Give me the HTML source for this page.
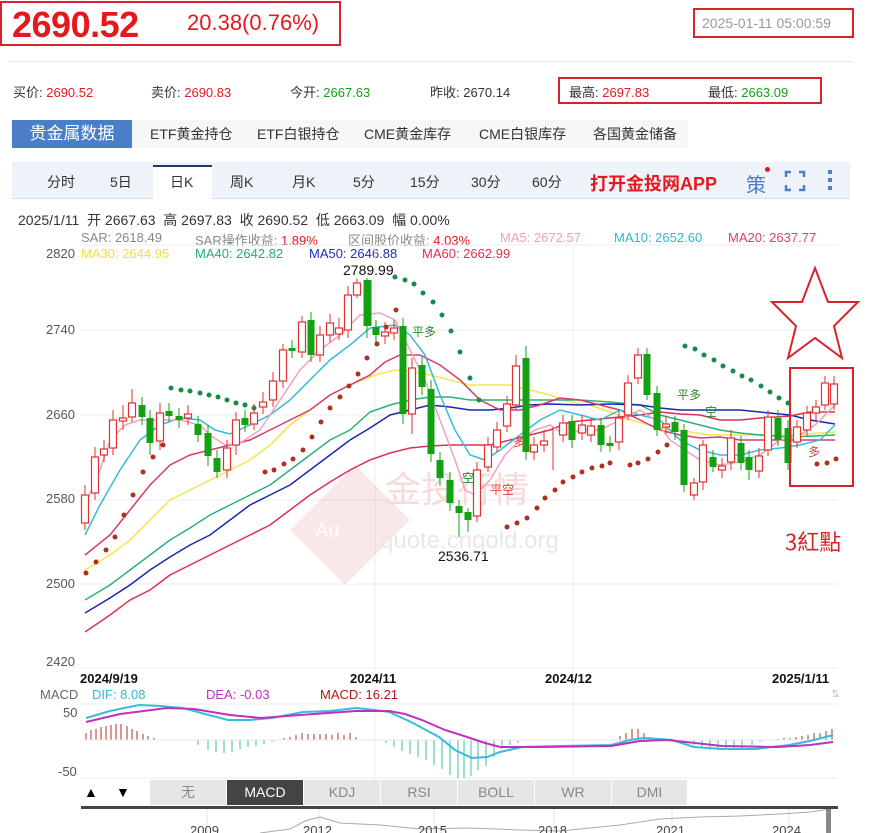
<!DOCTYPE html>
<html><head><meta charset="utf-8"><style>
*{margin:0;padding:0;box-sizing:border-box}
body{width:870px;height:833px;overflow:hidden;background:#fff;font-family:"Liberation Sans","Noto Sans CJK SC",sans-serif;position:relative;color:#333}
.a{position:absolute;white-space:nowrap}
.r{color:#e4181e}.g{color:#18a018}
.box{position:absolute;border:2px solid #d9232a}
.tab{position:absolute;top:120px;height:28px;line-height:28px;font-size:14px;color:#333}
.tb{position:absolute;top:172px;font-size:14px;color:#333}
.sub{position:absolute;top:780px;height:25px;line-height:25px;text-align:center;font-size:14px;color:#888;background:#e6e6e6;border-right:1px solid #fff}
</style></head><body>
<div class="box" style="left:0;top:1px;width:341px;height:45px"></div>
<div class="a r" style="left:12px;top:4px;font-size:36px;font-weight:bold;letter-spacing:-0.5px">2690.52</div>
<div class="a r" style="left:187px;top:10px;font-size:22px">20.38(0.76%)</div>
<div class="box" style="left:693px;top:8px;width:161px;height:30px"></div>
<div class="a" style="left:702px;top:15px;font-size:14px;color:#999">2025-01-11 05:00:59</div>
<div class="a" style="left:10px;top:61px;width:842px;height:1px;background:#e6e6e6"></div>
<div class="a" style="left:13px;top:82px;font-size:13px">买价: <span class="r">2690.52</span></div>
<div class="a" style="left:151px;top:82px;font-size:13px">卖价: <span class="r">2690.83</span></div>
<div class="a" style="left:290px;top:82px;font-size:13px">今开: <span class="g">2667.63</span></div>
<div class="a" style="left:430px;top:82px;font-size:13px">昨收: 2670.14</div>
<div class="box" style="left:558px;top:77px;width:264px;height:27px"></div>
<div class="a" style="left:569px;top:82px;font-size:13px">最高: <span class="r">2697.83</span></div>
<div class="a" style="left:708px;top:82px;font-size:13px">最低: <span class="g">2663.09</span></div>
<div class="a" style="left:132px;top:120px;width:556px;height:28px;background:#f7f7f7"></div>
<div class="tab" style="left:12px;width:120px;background:#4a7ec8;color:#fff;font-size:17px;text-align:center">贵金属数据</div>
<div class="tab" style="left:150px">ETF黄金持仓</div>
<div class="tab" style="left:257px">ETF白银持仓</div>
<div class="tab" style="left:364px">CME黄金库存</div>
<div class="tab" style="left:479px">CME白银库存</div>
<div class="tab" style="left:593px">各国黄金储备</div>
<div class="a" style="left:12px;top:162px;width:838px;height:37px;background:#eef3fa;border-bottom:1px solid #d8e0ea"></div>
<div class="a" style="left:153px;top:165px;width:59px;height:35px;background:#fff;border-top:2px solid #1f3a6a"></div>
<div class="tb" style="left:47px">分时</div><div class="tb" style="left:110px">5日</div><div class="tb" style="left:170px">日K</div><div class="tb" style="left:230px">周K</div><div class="tb" style="left:292px">月K</div><div class="tb" style="left:353px">5分</div><div class="tb" style="left:410px">15分</div><div class="tb" style="left:471px">30分</div><div class="tb" style="left:532px">60分</div>
<div class="a" style="left:590px;top:170px;font-size:18px;font-weight:bold;color:#e4181e">打开金投网APP</div>
<div class="a" style="left:746px;top:169px;font-size:20px;color:#4a7ec8">策</div>
<div class="a" style="left:765px;top:167px;width:5px;height:5px;border-radius:50%;background:#e4181e"></div>
<svg class="a" style="left:784px;top:170px" width="22" height="22"><path d="M2 7V2H7M15 2H20V7M20 15V20H15M7 20H2V15" stroke="#4a7ec8" stroke-width="2.5" fill="none"/></svg>
<div class="a" style="left:828px;top:170px;width:4px;height:4px;background:#4a7ec8;box-shadow:0 8px #4a7ec8,0 16px #4a7ec8"></div>
<div class="a" style="left:18px;top:210px;font-size:14px">2025/1/11 &nbsp;开 2667.63 &nbsp;高 2697.83 &nbsp;收 2690.52 &nbsp;低 2663.09 &nbsp;幅 0.00%</div>
<div class="a" style="left:81px;top:230px;font-size:13px;color:#888">SAR: 2618.49</div>
<div class="a" style="left:195px;top:230px;font-size:13px;color:#888">SAR操作收益: <span class="r">1.89%</span></div>
<div class="a" style="left:348px;top:230px;font-size:13px;color:#888">区间股价收益: <span class="r">4.03%</span></div>
<div class="a" style="left:500px;top:230px;font-size:13px;color:#f0a0b8">MA5: 2672.57</div>
<div class="a" style="left:614px;top:230px;font-size:13px;color:#30b8d0">MA10: 2652.60</div>
<div class="a" style="left:728px;top:230px;font-size:13px;color:#e04070">MA20: 2637.77</div>
<div class="a" style="left:46px;top:246px;font-size:13px;color:#555">2820</div>
<div class="a" style="left:81px;top:246px;font-size:13px;color:#f0e040">MA30: 2644.95</div>
<div class="a" style="left:195px;top:246px;font-size:13px;color:#20b070">MA40: 2642.82</div>
<div class="a" style="left:309px;top:246px;font-size:13px;color:#2030b0">MA50: 2646.88</div>
<div class="a" style="left:422px;top:246px;font-size:13px;color:#e03050">MA60: 2662.99</div>
<div class="a" style="left:46px;top:322px;font-size:13px;color:#555">2740</div>
<div class="a" style="left:46px;top:407px;font-size:13px;color:#555">2660</div>
<div class="a" style="left:46px;top:491px;font-size:13px;color:#555">2580</div>
<div class="a" style="left:46px;top:576px;font-size:13px;color:#555">2500</div>
<div class="a" style="left:46px;top:654px;font-size:13px;color:#555">2420</div>
<svg class="a" style="left:0;top:0" width="870" height="833">
<g stroke="#ececec" stroke-width="1">
<line x1="80" y1="245" x2="838" y2="245"/><line x1="80" y1="330" x2="838" y2="330"/><line x1="80" y1="415" x2="838" y2="415"/><line x1="80" y1="500" x2="838" y2="500"/><line x1="80" y1="584" x2="838" y2="584"/><line x1="80" y1="668" x2="838" y2="668"/>
<line x1="375" y1="245" x2="375" y2="778"/><line x1="573" y1="245" x2="573" y2="778"/>
<line x1="80" y1="704" x2="838" y2="704"/><line x1="80" y1="778" x2="838" y2="778"/>
</g>
<g opacity="0.12"><path d="M355 465 L410 520 L345 585 L290 530Z" fill="#d04040"/></g>
<text x="315" y="537" font-size="20" fill="#fff" opacity="0.9">Au</text>
<text x="385" y="502" font-size="36" fill="#f8dada" font-family="Noto Sans CJK SC">金投行情</text>
<text x="380" y="548" font-size="24" fill="#e8e8e8">quote.cngold.org</text>
<g fill="none" stroke-width="1.5">
<polyline stroke="#f2e84a" points="85,570 110,555 130,540 150,520 170,500 190,490 210,480 230,470 250,460 270,445 290,425 310,410 330,395 350,385 375,375 395,370 410,371 430,375 450,380 470,385 490,385 510,385 530,390 550,395 570,402 590,405 610,412 630,420 650,425 670,430 690,432 710,435 730,435 760,435 790,435 835,432"/>
<polyline stroke="#2bb07a" points="85,600 110,585 130,570 150,555 170,540 190,528 210,515 230,505 250,495 270,485 290,470 310,455 330,440 350,430 370,412 390,405 410,400 430,397 450,397 470,400 490,400 510,400 530,400 550,400 580,400 610,402 640,405 660,415 680,420 700,425 720,430 740,433 760,435 790,437 835,435"/>
<polyline stroke="#1a28b0" points="85,613 110,598 130,585 150,570 170,557 190,545 210,535 230,520 250,505 270,495 290,485 310,470 330,455 350,440 370,428 390,415 410,410 430,405 450,407 470,410 490,410 510,408 530,405 550,404 580,405 610,404 640,405 660,408 680,410 700,410 720,410 740,410 760,412 790,415 810,420 835,424"/>
<polyline stroke="#e03050" points="85,632 110,615 130,600 150,590 170,575 190,565 210,555 230,545 250,535 270,525 290,510 310,495 330,482 350,470 370,460 390,453 410,448 430,446 450,445 470,445 490,445 510,440 530,435 550,430 570,422 590,420 610,418 640,415 660,412 680,414 700,415 720,420 740,420 760,418 790,416 810,412 835,412"/>
<polyline stroke="#d83a70" points="85,555 110,535 130,510 150,485 170,465 190,455 210,450 230,445 250,440 270,430 290,420 310,410 330,395 350,385 370,375 385,362 400,355 420,355 440,365 460,380 480,400 500,410 520,410 540,405 560,398 580,400 600,405 620,410 640,420 660,430 680,435 700,438 720,437 740,440 760,440 780,440 800,440 835,440"/>
<polyline stroke="#38bcd8" points="85,535 100,505 120,470 140,440 160,425 180,418 200,420 215,430 230,434 250,425 270,415 290,400 310,380 330,360 350,345 370,328 395,325 410,335 425,355 440,395 455,430 470,455 485,460 500,450 520,435 540,420 560,410 580,415 600,420 620,410 640,415 660,420 680,440 700,450 720,455 740,455 760,450 780,448 800,445 820,440 835,425"/>
<polyline stroke="#f4a0b8" points="85,505 100,470 110,440 125,425 140,420 160,420 180,420 200,425 210,435 225,445 240,443 260,430 280,400 300,370 320,350 340,335 360,315 380,313 395,320 410,350 425,380 440,420 455,460 465,490 475,495 490,480 505,455 520,440 535,430 550,425 565,435 580,430 600,430 620,420 640,410 655,420 670,440 685,450 700,460 720,465 740,462 760,455 780,440 800,435 815,425 835,405"/>
</g>
<g fill="#b03020">
<circle cx="86" cy="573" r="2.5"/><circle cx="96" cy="562" r="2.5"/><circle cx="106" cy="550" r="2.5"/><circle cx="115" cy="537" r="2.5"/><circle cx="124" cy="515" r="2.5"/><circle cx="133" cy="495" r="2.5"/><circle cx="143" cy="472" r="2.5"/><circle cx="153" cy="457" r="2.5"/><circle cx="163" cy="445" r="2.5"/>
<circle cx="265" cy="472" r="2.5"/><circle cx="274" cy="470" r="2.5"/><circle cx="284" cy="464" r="2.5"/><circle cx="293" cy="459" r="2.5"/><circle cx="303" cy="450" r="2.5"/><circle cx="312" cy="437" r="2.5"/><circle cx="321" cy="422" r="2.5"/><circle cx="330" cy="408" r="2.5"/><circle cx="340" cy="397" r="2.5"/><circle cx="349" cy="386" r="2.5"/><circle cx="358" cy="374" r="2.5"/><circle cx="367" cy="358" r="2.5"/><circle cx="377" cy="344" r="2.5"/><circle cx="386" cy="327" r="2.5"/><circle cx="396" cy="310" r="2.5"/>
<circle cx="507" cy="527" r="2.5"/><circle cx="517" cy="523" r="2.5"/><circle cx="527" cy="518" r="2.5"/><circle cx="537" cy="508" r="2.5"/><circle cx="545" cy="498" r="2.5"/><circle cx="555" cy="490" r="2.5"/><circle cx="563" cy="482" r="2.5"/><circle cx="573" cy="477" r="2.5"/><circle cx="582" cy="472" r="2.5"/><circle cx="592" cy="468" r="2.5"/><circle cx="602" cy="466" r="2.5"/><circle cx="610" cy="463" r="2.5"/><circle cx="630" cy="465" r="2.5"/><circle cx="638" cy="463" r="2.5"/><circle cx="648" cy="459" r="2.5"/><circle cx="658" cy="452" r="2.5"/><circle cx="667" cy="445" r="2.5"/>
<circle cx="817" cy="464" r="2.5"/><circle cx="827" cy="463" r="2.5"/><circle cx="836" cy="459" r="2.5"/>
</g>
<g fill="#1a8a4a">
<circle cx="171" cy="388" r="2.5"/><circle cx="181" cy="390" r="2.5"/><circle cx="190" cy="391" r="2.5"/><circle cx="200" cy="393" r="2.5"/><circle cx="209" cy="395" r="2.5"/><circle cx="218" cy="397" r="2.5"/><circle cx="227" cy="400" r="2.5"/><circle cx="236" cy="403" r="2.5"/><circle cx="245" cy="405" r="2.5"/><circle cx="254" cy="408" r="2.5"/>
<circle cx="395" cy="277" r="2.5"/><circle cx="405" cy="280" r="2.5"/><circle cx="414" cy="284" r="2.5"/><circle cx="423" cy="293" r="2.5"/><circle cx="433" cy="302" r="2.5"/><circle cx="442" cy="315" r="2.5"/><circle cx="451" cy="331" r="2.5"/><circle cx="460" cy="352" r="2.5"/><circle cx="470" cy="378" r="2.5"/><circle cx="479" cy="400" r="2.5"/>
<circle cx="685" cy="346" r="2.5"/><circle cx="695" cy="349" r="2.5"/><circle cx="704" cy="355" r="2.5"/><circle cx="714" cy="360" r="2.5"/><circle cx="723" cy="366" r="2.5"/><circle cx="733" cy="371" r="2.5"/><circle cx="742" cy="376" r="2.5"/><circle cx="751" cy="380" r="2.5"/><circle cx="761" cy="386" r="2.5"/><circle cx="770" cy="392" r="2.5"/><circle cx="779" cy="398" r="2.5"/><circle cx="788" cy="403" r="2.5"/>
</g>
<path stroke="#e03030" stroke-width="1" d="M85 485V530M95 447V500M104 440V462M113 410V455M123 405V430M132 389V422M160 403V450M188 405V425M227 440V478M236 412V455M254 404V430M263 392V414M273 372V407M283 344V388M302 316V358M320 326V362M330 314V342M339 318V340M348 286V338M357 279V298M385 322V344M394 320V340M412 358V434M477 462V522M488 437V472M497 422V452M507 396V432M516 355V410M534 437V460M544 430V452M553 427V470M563 415V442M582 415V440M591 418V442M619 410V450M628 375V420M638 348V384M666 416V434M694 478V500M703 440V490M722 458V478M731 430V470M759 448V478M768 410V456M797 420V448M807 406V436M816 400V420M825 376V410M834 376V410"/>
<path stroke="#13a013" stroke-width="1" d="M142 397V425M150 410V455M169 403V422M179 408V428M198 416V442M208 425V466M217 450V478M245 410V432M292 340V358M311 312V362M367 278V338M376 320V342M403 318V424M422 357V395M431 380V462M440 452V486M450 472V511M459 500V537M468 508V532M526 346V460M572 415V448M601 418V452M610 436V452M647 348V400M657 386V436M675 416V440M684 424V492M713 450V472M741 436V470M749 450V480M778 410V446M788 420V470"/>
<g fill="#fff" stroke="#e03030" stroke-width="1.2">
<rect x="81.5" y="495" width="7" height="28"/><rect x="91.5" y="457" width="7" height="36"/><rect x="100.5" y="449" width="7" height="6"/><rect x="109.5" y="420" width="7" height="28"/><rect x="119.5" y="418" width="7" height="3"/><rect x="128.5" y="403" width="7" height="14"/><rect x="156.5" y="413" width="7" height="28"/><rect x="184.5" y="414" width="7" height="4"/><rect x="223.5" y="448" width="7" height="22"/><rect x="232.5" y="420" width="7" height="25"/><rect x="250.5" y="413" width="7" height="11"/><rect x="259.5" y="402" width="7" height="5"/><rect x="269.5" y="381" width="7" height="19"/><rect x="279.5" y="350" width="7" height="31"/><rect x="298.5" y="322" width="7" height="30"/><rect x="316.5" y="335" width="7" height="20"/><rect x="326.5" y="323" width="7" height="12"/><rect x="335.5" y="328" width="7" height="6"/><rect x="344.5" y="295" width="7" height="35"/><rect x="353.5" y="283" width="7" height="12"/><rect x="381.5" y="332" width="7" height="4"/><rect x="390.5" y="328" width="7" height="5"/><rect x="408.5" y="368" width="7" height="46"/>
<rect x="473.5" y="470" width="7" height="46"/><rect x="484.5" y="445" width="7" height="22"/><rect x="493.5" y="430" width="7" height="17"/><rect x="503.5" y="404" width="7" height="22"/><rect x="512.5" y="366" width="7" height="39"/><rect x="530.5" y="445" width="7" height="7"/><rect x="540.5" y="441" width="7" height="4"/><rect x="559.5" y="423" width="7" height="12"/><rect x="578.5" y="425" width="7" height="8"/><rect x="587.5" y="426" width="7" height="9"/><rect x="615.5" y="418" width="7" height="24"/><rect x="624.5" y="383" width="7" height="32"/><rect x="634.5" y="355" width="7" height="23"/><rect x="662.5" y="424" width="7" height="3"/><rect x="690.5" y="483" width="7" height="12"/><rect x="699.5" y="445" width="7" height="37"/><rect x="718.5" y="466" width="7" height="4"/><rect x="727.5" y="438" width="7" height="24"/><rect x="755.5" y="456" width="7" height="15"/><rect x="764.5" y="417" width="7" height="33"/><rect x="793.5" y="427" width="7" height="15"/><rect x="803.5" y="413" width="7" height="17"/><rect x="812.5" y="407" width="7" height="6"/><rect x="821.5" y="383" width="7" height="22"/><rect x="830.5" y="384" width="7" height="20"/>
</g>
<g fill="#13a013">
<rect x="138.5" y="405" width="7" height="12"/><rect x="146.5" y="418" width="7" height="25"/><rect x="165.5" y="411" width="7" height="5"/><rect x="175.5" y="416" width="7" height="4"/><rect x="194.5" y="424" width="7" height="11"/><rect x="204.5" y="433" width="7" height="23"/><rect x="213.5" y="458" width="7" height="14"/><rect x="241.5" y="418" width="7" height="7"/><rect x="288.5" y="348" width="7" height="3"/><rect x="307.5" y="320" width="7" height="35"/><rect x="363.5" y="280" width="8" height="46"/><rect x="372.5" y="327" width="7" height="8"/><rect x="399.5" y="326" width="7" height="88"/><rect x="418.5" y="365" width="7" height="22"/><rect x="427.5" y="389" width="7" height="65"/><rect x="436.5" y="460" width="7" height="18"/><rect x="446.5" y="480" width="7" height="23"/><rect x="455.5" y="506" width="7" height="7"/><rect x="464.5" y="512" width="7" height="8"/>
<rect x="522.5" y="358" width="7" height="94"/><rect x="568.5" y="421" width="7" height="19"/><rect x="597.5" y="425" width="7" height="20"/><rect x="606.5" y="443" width="7" height="3"/><rect x="643.5" y="354" width="7" height="41"/><rect x="653.5" y="393" width="7" height="37"/><rect x="671.5" y="422" width="7" height="10"/><rect x="680.5" y="430" width="7" height="55"/><rect x="709.5" y="457" width="7" height="10"/><rect x="737.5" y="443" width="7" height="20"/><rect x="745.5" y="457" width="7" height="13"/><rect x="774.5" y="418" width="7" height="22"/><rect x="784.5" y="428" width="7" height="35"/>
</g>
<text x="343" y="275" font-size="14" fill="#111">2789.99</text>
<text x="438" y="561" font-size="14" fill="#111">2536.71</text>
<g font-size="12" fill="#2a8a2a"><text x="412" y="336">平多</text><text x="462" y="482">空</text><text x="677" y="399">平多</text><text x="705" y="416">空</text></g>
<g font-size="12" fill="#e04040"><text x="490" y="494">平空</text><text x="513" y="446">多</text><text x="808" y="456">多</text></g>
<g fill="none" stroke="#d9232a" stroke-width="2">
<path d="M815 268 L828 302 L858 302 L834 326 L842 358 L815 338 L788 358 L796 326 L772 302 L802 302Z"/>
<rect x="790" y="368" width="63" height="118"/>
</g>
<text x="785" y="550" font-size="22" fill="#d9232a" font-family="Noto Sans CJK TC">3紅點</text>
<g font-size="13" font-weight="bold" fill="#111"><text x="80" y="683">2024/9/19</text><text x="350" y="683">2024/11</text><text x="545" y="683">2024/12</text><text x="772" y="683">2025/1/11</text></g>
<g font-size="13"><text x="40" y="699" fill="#666">MACD</text><text x="92" y="699" fill="#30b8d8">DIF: 8.08</text><text x="206" y="699" fill="#c030c0">DEA: -0.03</text><text x="320" y="699" fill="#b01818">MACD: 16.21</text></g>
<text x="63" y="717" font-size="13" fill="#555">50</text><text x="58" y="776" font-size="13" fill="#555">-50</text>
<path stroke="#b03020" stroke-width="1" d="M86 740V733M91 740V730M96 740V729M101 740V727M106 740V726M111 740V725M116 740V724M121 740V724M127 740V726M132 740V729M137 740V731M143 740V734M148 740V736M154 740V738M284 740V738M290 740V737M296 740V735M302 740V733M308 740V734M314 740V734M320 740V734M326 740V734M332 740V735M338 740V733M344 740V735M350 740V733M356 740V737M620 740V736M626 740V733M632 740V729M638 740V729M644 740V733M650 740V737M778 740V739M784 740V738M790 740V738M796 740V737M802 740V736M808 740V735M814 740V733M820 740V733M826 740V731M832 740V729"/>
<path stroke="#3ac0a0" stroke-width="1" d="M198 740V745M208 740V750M216 740V752M224 740V753M232 740V752M240 740V749M248 740V747M256 740V746M264 740V744M272 740V742M386 740V743M394 740V747M402 740V751M410 740V754M418 740V757M426 740V760M434 740V765M442 740V769M450 740V775M458 740V778M464 740V778M471 740V776M478 740V770M486 740V766M494 740V757M502 740V749M510 740V745M518 740V743M694 740V745M702 740V748M710 740V750M718 740V750M726 740V750M734 740V749M742 740V748M752 740V745M760 740V742"/>
<line x1="80" y1="740" x2="838" y2="740" stroke="#e8e8e8"/>
<polyline fill="none" stroke="#38bcd8" stroke-width="2" points="86,718 110,711 139,705 160,706 183,708 205,714 228,720 250,720 272,718 303,712 330,711 356,708 375,710 389,712 411,722 439,737 455,750 472,758 487,757 500,752 522,747 560,746 611,745 630,740 644,738 660,739 672,740 694,747 722,749 756,749 789,745 810,741 833,735"/>
<polyline fill="none" stroke="#c030c0" stroke-width="2" points="86,722 120,714 167,708 194,709 230,715 261,718 300,715 356,711 389,711 405,714 422,720 445,730 467,737 485,743 500,747 540,747 611,746 640,741 667,740 695,743 722,746 778,747 810,745 833,742"/>
<path d="M833 697l3-7 3 7z M832 690l3 7 3-7z" fill="#ccc"/>
</svg>
<div class="a" style="left:80px;top:779px;width:758px;height:27px;background:#fff"></div>
<div class="a" style="left:84px;top:784px;font-size:14px;color:#000">▲</div>
<div class="a" style="left:116px;top:784px;font-size:14px;color:#000">▼</div>
<div class="sub" style="left:150px;width:77px">无</div>
<div class="sub" style="left:227px;width:77px;background:#444;color:#fff">MACD</div>
<div class="sub" style="left:304px;width:77px">KDJ</div>
<div class="sub" style="left:381px;width:77px">RSI</div>
<div class="sub" style="left:458px;width:77px">BOLL</div>
<div class="sub" style="left:535px;width:77px">WR</div>
<div class="sub" style="left:612px;width:76px">DMI</div>
<div class="a" style="left:81px;top:806px;width:757px;height:3px;background:#444"></div>
<svg class="a" style="left:0;top:809px" width="870" height="24">
<g stroke="#e6e6e6"><line x1="207" y1="0" x2="207" y2="24"/><line x1="319" y1="0" x2="319" y2="24"/><line x1="434" y1="0" x2="434" y2="24"/><line x1="554" y1="0" x2="554" y2="24"/><line x1="672" y1="0" x2="672" y2="24"/><line x1="789" y1="0" x2="789" y2="24"/></g>
<polyline fill="none" stroke="#aaa" stroke-width="1" points="260,24 290,20 305,12 320,8 340,14 380,16 420,20 470,19 520,21 560,22 620,16 660,10 700,8 740,7 780,5 810,3 830,0"/>
<g font-size="13" fill="#444"><text x="190" y="26">2009</text><text x="303" y="26">2012</text><text x="418" y="26">2015</text><text x="538" y="26">2018</text><text x="656" y="26">2021</text><text x="772" y="26">2024</text></g>
<rect x="826" y="0" width="5" height="24" fill="#888"/>
</svg>
</body></html>
